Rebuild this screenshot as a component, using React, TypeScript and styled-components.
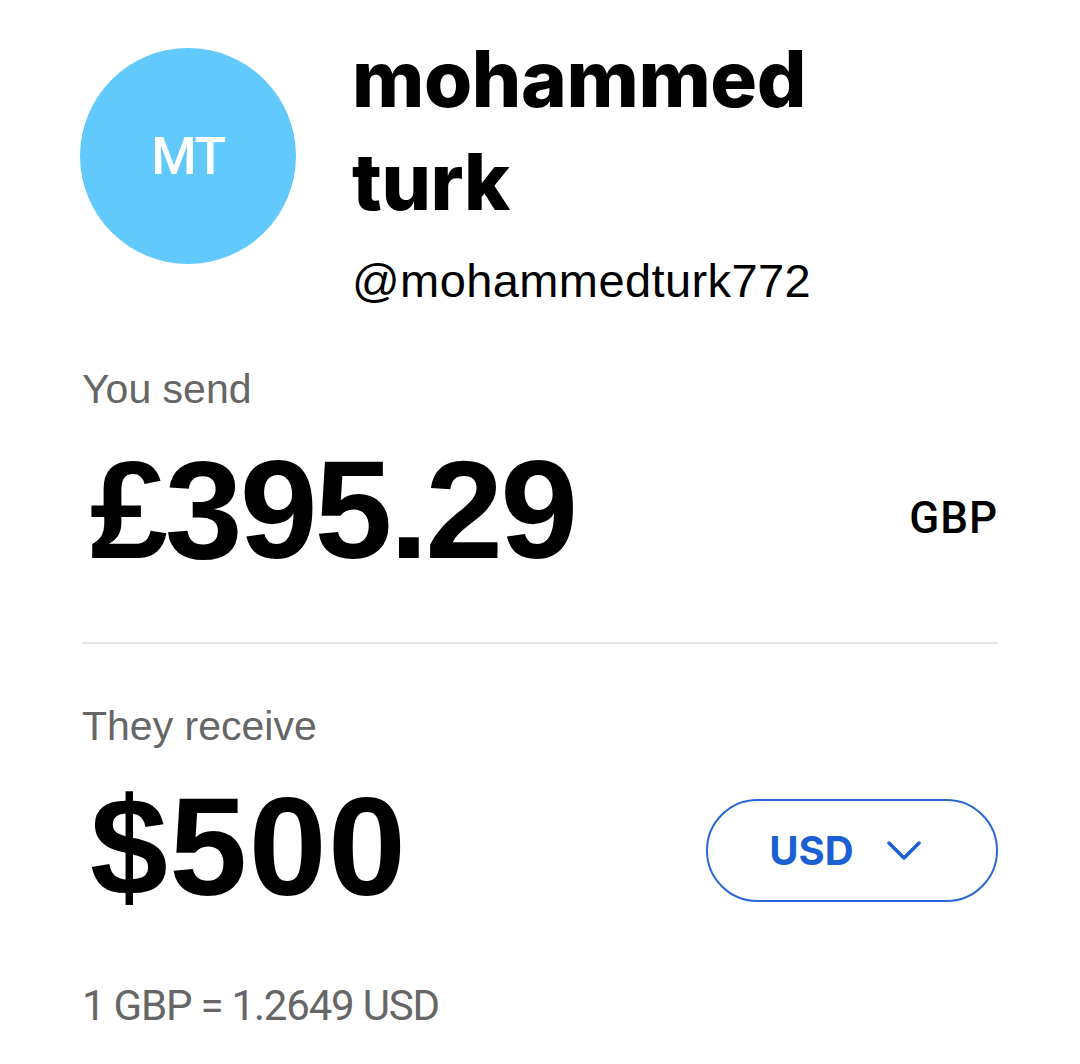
import React from 'react'
import styled, { createGlobalStyle } from 'styled-components'

const GlobalStyle = createGlobalStyle`
  html, body {
    margin: 0;
    padding: 0;
    background: #ffffff;
  }
  body {
    font-family: 'Liberation Sans', Arial, sans-serif;
    color: #000000;
  }
`

const Page = styled.div`
  width: 1080px;
  box-sizing: border-box;
  padding: 27px 82px 0 82px;
`

const Header = styled.div`
  display: flex;
  align-items: flex-start;
  gap: 56px;
`

const Avatar = styled.div`
  flex: 0 0 auto;
  width: 216px;
  height: 216px;
  margin-top: 21px;
  margin-left: -2px;
  border-radius: 50%;
  background: #61c9fb;
  display: flex;
  align-items: center;
  justify-content: center;
  color: #ffffff;
  font-family: Roboto, 'Liberation Sans', sans-serif;
  font-weight: 500;
  font-size: 52px;
  letter-spacing: -1.5px;
`

const NameBlock = styled.div`
  display: flex;
  flex-direction: column;
`

const Name = styled.h1`
  margin: 0;
  font-family: Inter, 'Noto Sans', sans-serif;
  font-weight: 800;
  font-size: 78px;
  line-height: 103px;
  letter-spacing: -0.4px;
`

const Handle = styled.div`
  margin-top: 23px;
  font-size: 47px;
  line-height: 50px;
  letter-spacing: 0.4px;
`

const Label = styled.div<{ $gap: number }>`
  margin-top: ${(p) => p.$gap}px;
  font-size: 41px;
  line-height: 46px;
  color: #666666;
  letter-spacing: 0px;
`

const AmountRow = styled.div`
  margin-top: 28px;
  display: flex;
  align-items: center;
  justify-content: space-between;
  height: 140px;
`

const Amount = styled.div<{ $spacing: number }>`
  margin-left: 8px;
  font-weight: 700;
  font-size: 140px;
  line-height: 140px;
  letter-spacing: ${(p) => p.$spacing}px;
`

const Currency = styled.div`
  padding-top: 15px;
  font-family: Roboto, 'Liberation Sans', sans-serif;
  font-weight: 500;
  font-size: 44px;
  line-height: 44px;
  letter-spacing: 1px;
`

const Divider = styled.hr`
  margin: 62px 0 0 0;
  border: none;
  height: 2px;
  background: #e6e6e6;
`

const CurrencyPicker = styled.button`
  margin-top: 7px;
  width: 292px;
  height: 103px;
  box-sizing: border-box;
  border: 2.5px solid #2a68d6;
  border-radius: 999px;
  background: #ffffff;
  display: flex;
  align-items: center;
  justify-content: center;
  gap: 33px;
  padding: 0 14px 0 0;
  color: #1b5fd4;
  font-family: Inter, 'Noto Sans', sans-serif;
  font-weight: 700;
  font-size: 40px;
  cursor: pointer;
`

const Rate = styled.div`
  margin-top: 65px;
  font-family: Roboto, 'Liberation Sans', sans-serif;
  font-size: 42px;
  line-height: 48px;
  color: #666666;
  letter-spacing: -1.2px;
`

function Chevron() {
  return (
    <svg width="34" height="20" viewBox="0 0 34 20" fill="none">
      <polyline
        points="2,2 17,17 32,2"
        stroke="#1b5fd4"
        strokeWidth="3.5"
        strokeLinecap="round"
        strokeLinejoin="round"
      />
    </svg>
  )
}

export default function App() {
  return (
    <>
      <GlobalStyle />
      <Page>
        <Header>
          <Avatar>MT</Avatar>
          <NameBlock>
            <Name>
              mohammed
              <br />
              turk
            </Name>
            <Handle>@mohammedturk772</Handle>
          </NameBlock>
        </Header>

        <Label $gap={60}>You send</Label>
        <AmountRow>
          <Amount $spacing={-3}>£395.29</Amount>
          <Currency>GBP</Currency>
        </AmountRow>

        <Divider />

        <Label $gap={59}>They receive</Label>
        <AmountRow>
          <Amount $spacing={1.5}>$500</Amount>
          <CurrencyPicker type="button">
            USD
            <Chevron />
          </CurrencyPicker>
        </AmountRow>

        <Rate>1 GBP = 1.2649 USD</Rate>
      </Page>
    </>
  )
}
